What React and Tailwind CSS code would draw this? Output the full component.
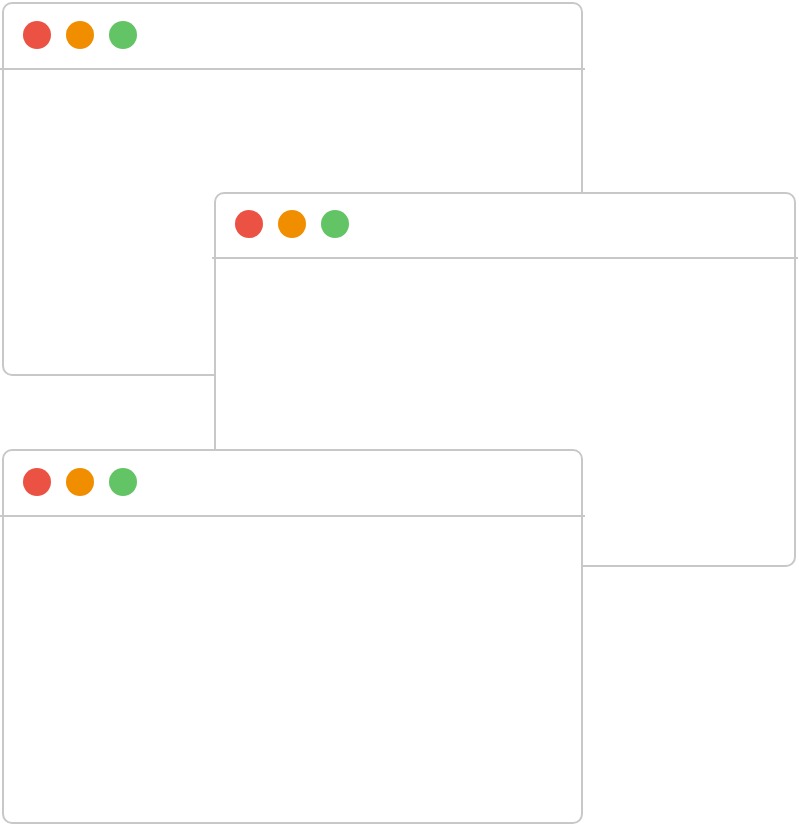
import React from 'react';

const windows = [
  { id: 'back', pos: 'left-[2px] top-[2px] h-[374px]' },
  { id: 'middle', pos: 'left-[214px] top-[191.5px] h-[375px] w-[582px]' },
  { id: 'front', pos: 'left-[2px] top-[449px] h-[375px]' }
];

const Window = ({ pos }) => (
  <div
    className={`absolute ${pos} w-[581px] rounded-[10px] border-2 border-[#c8c8c8] bg-white`}
  >
    {/* Title bar with traffic lights */}
    <div className="relative h-[65.5px] flex items-center gap-[15px] pl-[18.5px] pb-[4px]">
      <span className="w-[28px] h-[28px] rounded-full bg-[#eb5243]" />
      <span className="w-[28px] h-[28px] rounded-full bg-[#f08e00]" />
      <span className="w-[28px] h-[28px] rounded-full bg-[#62c465]" />
      <div className="absolute -left-[4px] -right-[4px] bottom-0 h-[2px] bg-[#c8c8c8]" />
    </div>
  </div>
);

export default function App() {
  return (
    <div className="relative w-[799px] h-[826px] bg-white overflow-hidden">
      {windows.map((w) => (
        <Window key={w.id} pos={w.pos} />
      ))}
    </div>
  );
}
